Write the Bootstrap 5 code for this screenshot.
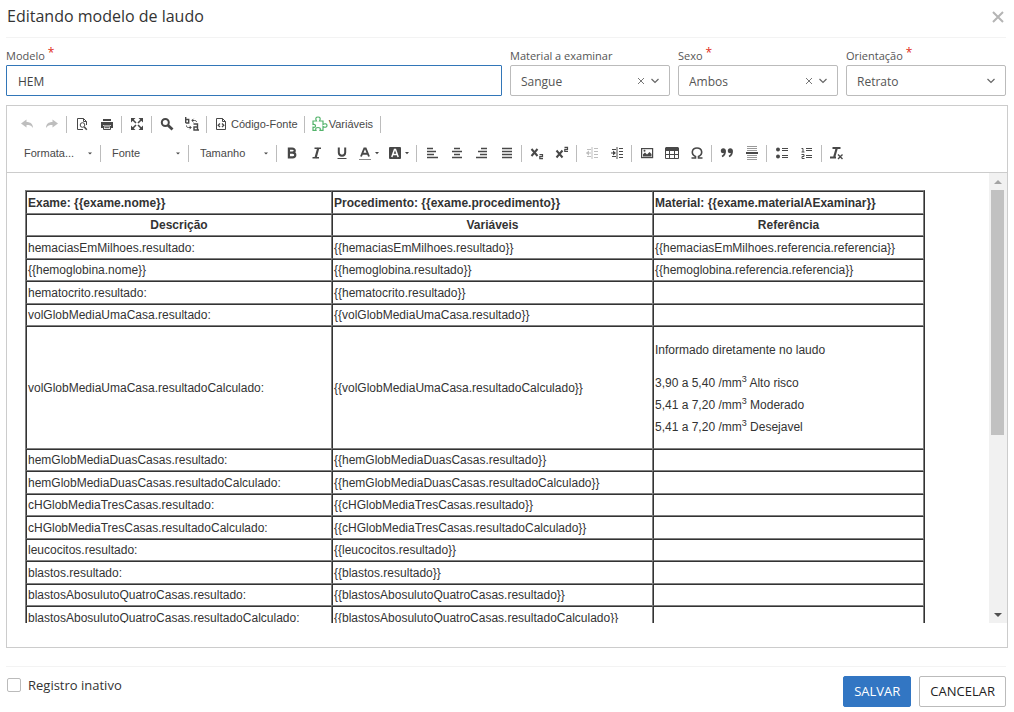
<!DOCTYPE html>
<html lang="pt-BR">
<head>
<meta charset="utf-8">
<meta name="viewport" content="width=device-width, initial-scale=1">
<title>Editando modelo de laudo</title>
<link href="https://cdn.jsdelivr.net/npm/bootstrap@5.3.0/dist/css/bootstrap.min.css" rel="stylesheet">
<style>
  body { font-family: "Open Sans", "Noto Sans", sans-serif; font-size: 12px; line-height: 18px; color: #333; background: #fff; }
  .page { padding: 0 8px 0 6px; }
  .page-head { height: 38px; padding: 0 0 0 1px; border-bottom: 1px solid #f3f3f3; }
  .page-head h1 { font-size: 16px; line-height: 32px; }
  .close-btn { width: 16px; height: 34px; color: #b5b5b5; }
  .fields { --bs-gutter-x: 8px; padding-top: 9px; }
  .fields .form-label { display: block; height: 18px; margin: 0; font-size: 11px; line-height: 18px; color: #555; font-weight: 500; }
  .req { color: #e02b20; font-size: 12px; line-height: 0; vertical-align: 3px; }
  .fields .form-control, .fields .form-select { height: 31px; font-size: 12px; line-height: 18px; padding: 7px 11px 5px; border: 1px solid #bbb; border-radius: 2px; color: #555; box-shadow: none; }
  .fields .form-select { padding-left: 10px; }
  .fields .form-control { border-color: #3276b8; border-radius: 1px; color: #444; }
  .fields .form-select { background-size: 8px 6px; background-position: right 10px center; background-image: url("data:image/svg+xml,%3csvg xmlns='http://www.w3.org/2000/svg' viewBox='0 0 8 6'%3e%3cpath d='M.5 1 4 4.5 7.500 1' fill='none' stroke='%23666' stroke-width='1.200'/%3e%3c/svg%3e"); }
  .clear-btn { right: 25px; top: 12px; width: 8px; height: 8px; color: #777; }
  .editor { margin: 9px -2px 0 0; border: 1px solid #ccc; padding-bottom: 24px; font-family: "Liberation Sans", Arial, sans-serif; }
  .tools { padding: 4px 7px; border-bottom: 1px solid #ccc; color: #484848; }
  .tool-row { height: 28px; margin-bottom: 1px; }
  .tool { width: 25px; height: 26px; padding: 0; border: 0; background: none; color: inherit; display: flex; align-items: center; justify-content: center; flex: none; font-size: 11px; line-height: 16px; }
  .tool svg { width: 16px; height: 16px; flex: none; }
  .tool.wide { width: 30px; }
  .tool.named { width: auto; padding: 0 4px; gap: 2px; }
  .tool.tight { gap: 1px; padding: 0 5px; }
  .tool:disabled { opacity: .35; }
  .sep { width: 1px; height: 17px; margin: 0 2px; background: #bcbcbc; flex: none; }
  .combo { width: 83px; height: 26px; padding: 0 20px 0 9px; border: 0; appearance: none; color: inherit; font-size: 11px; line-height: 16px; background: url("data:image/svg+xml,%3csvg xmlns='http://www.w3.org/2000/svg' viewBox='0 0 4 3'%3e%3cpath d='M0 .5h4L2 2.500z' fill='%23484848'/%3e%3c/svg%3e") right 6px center / 4px 3px no-repeat; }
  .combo.first { width: 84px; padding-left: 10px; }
  .doc { height: 450px; }
  .doc-body { overflow: auto; scrollbar-width: none; padding: 17px 20px 17px 18px; font-size: 12px; color: #333; }
  .doc-body::-webkit-scrollbar { display: none; }
  .report { width: 100%; max-width: 900px; table-layout: fixed; border-collapse: separate; border-spacing: 0; border: 1px solid; border-color: #808080 #333 #333 #808080; line-height: 18px; }
  .report td, .report th { border: 1px solid; border-color: #333 #808080 #808080 #333; padding: 1px; vertical-align: middle; white-space: nowrap; }
  .report tr:nth-child(odd) { height: 23px; }
  .report tr:nth-child(even) { height: 22px; }
  .report p { margin: 12px 0; line-height: 20px; }
  .report p + p { line-height: 22px; margin-bottom: 9px; }
  .report sup { font-size: 9px; line-height: 0; top: -5px; vertical-align: baseline; }
  .col-a { width: 306px; }
  .col-b { width: 321px; }
  .scroll { width: 18px; background: #f1f1f1; flex: none; padding: 0 3px 0 2px; }
  .scroll button { height: 17px; padding: 0; border: 0; background: none; color: #505050; }
  .thumb { height: 245px; background: #c1c1c1; }
  .page-foot { margin: 18px 0 0; padding: 9px 0 5px; border-top: 1px solid #f3f3f3; }
  .page-foot .form-check-input { width: 14px; height: 14px; margin: 2px 7px 0 1px; border: 1px solid #bbb; border-radius: 2px; flex: none; }
  .page-foot label { font-size: 13px; line-height: 18px; }
  .page-foot .btn { height: 31px; padding: 5px 10px; font-size: 13px; line-height: 19px; border-radius: 2px; }
  .save-btn { background: #3276c3; border-color: #3276c3; color: #fff; }
  .cancel-btn { background: #fff; border-color: #bbb; color: #222; }
</style>
</head>
<body>
<main class="page">
  <header class="page-head d-flex justify-content-between">
    <h1 class="fw-normal m-0">Editando modelo de laudo</h1>
    <button type="button" class="close-btn btn p-0 border-0 d-flex align-items-center justify-content-center" aria-label="Fechar"><svg width="12" height="12" viewBox="0 0 12 12"><path d="M1 1l10 10M11 1L1 11" stroke="currentColor" stroke-width="2"/></svg></button>
  </header>

  <form>
    <div class="row fields">
      <div class="col-6">
        <label class="form-label" for="modelo">Modelo <span class="req">*</span></label>
        <input id="modelo" class="form-control" type="text" value="HEM">
      </div>
      <div class="col-2">
        <label class="form-label" for="material">Material a examinar</label>
        <div class="position-relative">
          <select id="material" class="form-select"><option>Sangue</option></select>
          <button type="button" class="clear-btn btn p-0 border-0 d-flex position-absolute" aria-label="Limpar material"><svg width="8" height="8" viewBox="0 0 8 8"><path d="M1 1l6 6M7 1L1 7" stroke="currentColor"/></svg></button>
        </div>
      </div>
      <div class="col-2">
        <label class="form-label" for="sexo">Sexo <span class="req">*</span></label>
        <div class="position-relative">
          <select id="sexo" class="form-select"><option>Ambos</option></select>
          <button type="button" class="clear-btn btn p-0 border-0 d-flex position-absolute" aria-label="Limpar sexo"><svg width="8" height="8" viewBox="0 0 8 8"><path d="M1 1l6 6M7 1L1 7" stroke="currentColor"/></svg></button>
        </div>
      </div>
      <div class="col-2">
        <label class="form-label" for="orientacao">Orientação <span class="req">*</span></label>
        <select id="orientacao" class="form-select"><option>Retrato</option></select>
      </div>
    </div>

    <section class="editor">
      <div class="tools">
        <div class="tool-row d-flex align-items-center">
          <button type="button" class="tool" disabled aria-label="Desfazer"><svg viewBox="0 0 16 16"><path d="M2 7.500l5.500-4v2.500c4 0 6.500 2 6.500 6-1.500-2.500-3.500-3-6.500-3v2.500z" fill="currentColor"/></svg></button>
          <button type="button" class="tool" disabled aria-label="Refazer"><svg viewBox="0 0 16 16"><path d="M14 7.500l-5.500-4v2.500C4.500 6 2 8 2 12c1.500-2.500 3.500-3 6.500-3v2.500z" fill="currentColor"/></svg></button>
          <span class="sep"></span>
          <button type="button" class="tool" aria-label="Visualizar"><svg viewBox="0 0 16 16" fill="none" stroke="currentColor"><path d="M9 13.500H3.500v-11h6l3 3V9M9.500 2.500v3h3"/><circle cx="8.500" cy="9" r="2.300"/><path d="M10.300 11l2.500 2.800" stroke-width="1.600"/></svg></button>
          <button type="button" class="tool" aria-label="Imprimir"><svg viewBox="0 0 16 16"><path d="M4 3h8v2H4zM2 6h12v6h-2V9H4v3H2z" fill="currentColor"/><path d="M4.500 10h7v3.500h-7zM5.500 11.700h5" fill="#fff" stroke="currentColor"/></svg></button>
          <span class="sep"></span>
          <button type="button" class="tool" aria-label="Maximizar"><svg viewBox="0 0 16 16"><path d="M2 2h4.500L2 6.500zM14 2H9.500L14 6.500zM2 14h4.500L2 9.500zM14 14H9.500L14 9.500z" fill="currentColor"/><path d="M3 3l4 4M13 3L9 7M3 13l4-4M13 13L9 9" stroke="currentColor" stroke-width="1.600"/></svg></button>
          <span class="sep"></span>
          <button type="button" class="tool" aria-label="Localizar"><svg viewBox="0 0 16 16" fill="none" stroke="currentColor"><circle cx="6.300" cy="6.500" r="3.500" stroke-width="2"/><path d="M9 9.300l4.500 4.200" stroke-width="2.800"/></svg></button>
          <button type="button" class="tool" aria-label="Substituir"><svg viewBox="0 0 16 16" fill="none" stroke="currentColor" stroke-width="1.400"><path d="M1.700 1v6M1.700 3.500h3V7h-3M9.500 8h4v6H10v-3h3.500M14 14h1"/><path d="M8 4.500h2.500c1.500 0 2 .5 2 1.500M9.500 2.800L7.800 4.500l1.700 1.700M2.500 9.500c0 1.500.5 2 2 2H7M5.500 9.800L7.200 11.500l-1.700 1.700" stroke-width="1"/></svg></button>
          <span class="sep"></span>
          <button type="button" class="tool named"><svg viewBox="0 0 16 16" fill="none" stroke="currentColor"><path d="M3.500 2.500h6l3 3v8h-9zM9.500 2.500v3h3"/><path d="M7 7.500L5.200 9.300 7 11M9 7.500l1.800 1.800L9 11" stroke-width="1.300"/></svg>Código-Fonte</button>
          <span class="sep"></span>
          <button type="button" class="tool named tight"><svg viewBox="0 0 16 16" fill="none" stroke="#53b36b" stroke-width="1.200"><path d="M1 5h3.500C3 2.500 4 1 6 1s3 1.500 1.500 4H11v3.500c2-1.300 4-.8 4 1s-2 2.300-4 1V14.400H8c1-2-.3-2.900-2-2.900s-3 .9-2 2.900H1v-3.200c2 .5 2.500-.5 2.500-1.400S3 8.200 1 8.500z"/></svg>Variáveis</button>
          <span class="sep"></span>
        </div>
        <div class="tool-row d-flex align-items-center">
          <select class="combo first" aria-label="Formatação"><option>Formata...</option></select>
          <span class="sep"></span>
          <select class="combo" aria-label="Fonte"><option>Fonte</option></select>
          <span class="sep"></span>
          <select class="combo" aria-label="Tamanho"><option>Tamanho</option></select>
          <span class="sep"></span>
          <button type="button" class="tool" aria-label="Negrito"><svg viewBox="0 0 16 16" fill="none" stroke="currentColor" stroke-width="2.200"><path d="M4.900 3.600h3.300c3.500 0 3.300 4 0 4H4.900h3.700c3.700 0 3.500 4.800 0 4.800H4.900z"/></svg></button>
          <button type="button" class="tool" aria-label="Itálico"><svg viewBox="0 0 16 16" fill="none" stroke="currentColor"><path d="M5.500 3.200H12M3.500 12.800H10" stroke-width="1.500"/><path d="M9.300 3L6.500 13" stroke-width="2.200"/></svg></button>
          <button type="button" class="tool" aria-label="Sublinhado"><svg viewBox="0 0 16 16" fill="none" stroke="currentColor"><path d="M4.800 2.500v5c0 4.200 6.400 4.200 6.400 0v-5" stroke-width="2"/><path d="M3.500 13.500h9"/></svg></button>
          <button type="button" class="tool wide" aria-label="Cor do texto"><svg viewBox="0 0 16 16" fill="none" stroke="currentColor"><path d="M4 11.500L7.300 3.500h1.400l3.300 8M5.500 8.700h5" stroke-width="1.900"/><path d="M2 14.500h12" stroke="#888"/></svg><svg viewBox="0 0 8 16" style="width:8px"><path d="M2 7h4L4 9.300z" fill="currentColor"/></svg></button>
          <button type="button" class="tool wide" aria-label="Cor do plano de fundo"><svg viewBox="0 0 16 16"><rect x="2" y="2" width="12" height="12" rx="1" fill="currentColor"/><path d="M4.800 12L7.500 4.500h1L11.200 12M6 9.500h4" fill="none" stroke="#fff" stroke-width="1.500"/></svg><svg viewBox="0 0 8 16" style="width:8px"><path d="M2 7h4L4 9.300z" fill="currentColor"/></svg></button>
          <span class="sep"></span>
          <button type="button" class="tool" aria-label="Alinhar à esquerda"><svg viewBox="0 0 16 16" stroke="currentColor" stroke-width="1.700"><path d="M3 3.500h6M3 6.500h9M3 9.500h7M3 12.500h11"/></svg></button>
          <button type="button" class="tool" aria-label="Centralizar"><svg viewBox="0 0 16 16" stroke="currentColor" stroke-width="1.700"><path d="M5 3.500h6M3 6.500h10M5 9.500h6M3 12.500h10"/></svg></button>
          <button type="button" class="tool" aria-label="Alinhar à direita"><svg viewBox="0 0 16 16" stroke="currentColor" stroke-width="1.700"><path d="M7 3.500h6M4 6.500h9M6 9.500h7M2 12.500h11"/></svg></button>
          <button type="button" class="tool" aria-label="Justificado"><svg viewBox="0 0 16 16" stroke="currentColor" stroke-width="1.700"><path d="M3 3.500h10M3 6.500h10M3 9.500h10M3 12.500h10"/></svg></button>
          <span class="sep"></span>
          <button type="button" class="tool" aria-label="Subscrito"><svg viewBox="0 0 16 16" fill="none" stroke="currentColor"><path d="M2.500 4l6 7M8.500 4l-6 7" stroke-width="2"/><path d="M10.500 9.700h3v2h-2.700v2h3.200" stroke-width="1.200"/></svg></button>
          <button type="button" class="tool" aria-label="Sobrescrito"><svg viewBox="0 0 16 16" fill="none" stroke="currentColor"><path d="M2.500 5.500l6 7M8.500 5.500l-6 7" stroke-width="2"/><path d="M10.500 2.300h3v2h-2.700v2h3.200" stroke-width="1.200"/></svg></button>
          <span class="sep"></span>
          <button type="button" class="tool" disabled aria-label="Diminuir recuo"><svg viewBox="0 0 16 16" fill="none" stroke="currentColor"><path d="M8 2v12M10 3.500h4M10 6.500h4M10 9.500h4M10 12.500h4M2.500 8H7M3 4.500h4M3 11.500h4"/><path d="M2 8l3-2.500v5z" fill="currentColor" stroke="none"/></svg></button>
          <button type="button" class="tool" aria-label="Aumentar recuo"><svg viewBox="0 0 16 16" fill="none" stroke="currentColor"><path d="M8 2v12M10 3.500h4M10 6.500h4M10 9.500h4M10 12.500h4M2 8h4M3 4.500h4M3 11.500h4"/><path d="M7 8L4 5.500v5z" fill="currentColor" stroke="none"/></svg></button>
          <span class="sep"></span>
          <button type="button" class="tool" aria-label="Imagem"><svg viewBox="0 0 16 16"><rect x="2.600" y="3.600" width="11" height="9" fill="none" stroke="currentColor" stroke-width="1.200"/><path d="M4 11.500V9.300l2-1.800 2 2L10.500 7l2 2v2.500z" fill="currentColor"/><circle cx="5.500" cy="5.800" r="1" fill="currentColor"/></svg></button>
          <button type="button" class="tool" aria-label="Tabela"><svg viewBox="0 0 16 16"><path d="M1.500 2h13v4h-13z" fill="currentColor"/><path d="M1.500 3v10.500h13V3M1.500 9.500h13M5.500 5v8.500M10.500 5v8.500" fill="none" stroke="currentColor"/></svg></button>
          <button type="button" class="tool" aria-label="Caractere especial"><svg viewBox="0 0 16 16" fill="none" stroke="currentColor" stroke-width="1.600"><path d="M2.500 13h4v-1.500C1.500 9 2.700 3 8 3s6.500 6 1.500 8.500V13h4"/></svg></button>
          <span class="sep"></span>
          <button type="button" class="tool" aria-label="Citação"><svg viewBox="0 0 16 16"><g fill="currentColor"><circle cx="4.300" cy="5.800" r="2.500"/><circle cx="11.300" cy="5.800" r="2.500"/></g><path d="M6 5.500c.3 3-.8 5-3 6M13 5.500c.3 3-.8 5-3 6" fill="none" stroke="currentColor" stroke-width="1.600"/></svg></button>
          <button type="button" class="tool" aria-label="Linha horizontal"><svg viewBox="0 0 16 16"><path d="M3 1.500h10M3 3.500h10M3 5.500h10M3 10.500h10M3 12.500h10M3 14.500h10" stroke="#999"/><path d="M2 8h12" stroke="currentColor" stroke-width="2"/></svg></button>
          <span class="sep"></span>
          <button type="button" class="tool" aria-label="Lista com marcadores"><svg viewBox="0 0 16 16"><circle cx="4" cy="4.500" r="2" fill="currentColor"/><circle cx="4" cy="11.500" r="2" fill="currentColor"/><path d="M8 3.500h6M8 5.500h6M8 10.500h6M8 12.500h6" stroke="currentColor"/></svg></button>
          <button type="button" class="tool" aria-label="Lista numerada"><svg viewBox="0 0 16 16" fill="none" stroke="currentColor"><path d="M2.500 3.500H4v3.500M2.500 7h3M2.500 9.500h2.500v2H3v2h2.500M7 3.500h6M7 5.500h6M7 10.500h6M7 12.500h6"/></svg></button>
          <span class="sep"></span>
          <button type="button" class="tool" aria-label="Remover formatação"><svg viewBox="0 0 16 16" fill="none" stroke="currentColor"><path d="M3.500 3h8M1 12.500h6" stroke-width="1.800"/><path d="M7.800 3L5.200 12" stroke-width="2.200"/><path d="M9 9.500l4.500 4.500M13.500 9.500L9 14" stroke-width="1.400"/></svg></button>
        </div>
      </div>

      <div class="doc d-flex">
        <div class="doc-body flex-grow-1">
          <table class="report">
            <colgroup><col class="col-a"><col class="col-b"><col></colgroup>
            <tbody>
              <tr><td><strong>Exame: {{exame.nome}}</strong></td><td><strong>Procedimento: {{exame.procedimento}}</strong></td><td><strong>Material: {{exame.materialAExaminar}}</strong></td></tr>
              <tr class="text-center"><th>Descrição</th><th>Variáveis</th><th>Referência</th></tr>
              <tr><td>hemaciasEmMilhoes.resultado:</td><td>{{hemaciasEmMilhoes.resultado}}</td><td>{{hemaciasEmMilhoes.referencia.referencia}}</td></tr>
              <tr><td>{{hemoglobina.nome}}</td><td>{{hemoglobina.resultado}}</td><td>{{hemoglobina.referencia.referencia}}</td></tr>
              <tr><td>hematocrito.resultado:</td><td>{{hematocrito.resultado}}</td><td></td></tr>
              <tr><td>volGlobMediaUmaCasa.resultado:</td><td>{{volGlobMediaUmaCasa.resultado}}</td><td></td></tr>
              <tr><td>volGlobMediaUmaCasa.resultadoCalculado:</td><td>{{volGlobMediaUmaCasa.resultadoCalculado}}</td><td><p>Informado diretamente no laudo</p><p>3,90 a 5,40 /mm<sup>3</sup> Alto risco<br>5,41 a 7,20 /mm<sup>3</sup> Moderado<br>5,41 a 7,20 /mm<sup>3</sup> Desejavel</p></td></tr>
              <tr><td>hemGlobMediaDuasCasas.resultado:</td><td>{{hemGlobMediaDuasCasas.resultado}}</td><td></td></tr>
              <tr><td>hemGlobMediaDuasCasas.resultadoCalculado:</td><td>{{hemGlobMediaDuasCasas.resultadoCalculado}}</td><td></td></tr>
              <tr><td>cHGlobMediaTresCasas.resultado:</td><td>{{cHGlobMediaTresCasas.resultado}}</td><td></td></tr>
              <tr><td>cHGlobMediaTresCasas.resultadoCalculado:</td><td>{{cHGlobMediaTresCasas.resultadoCalculado}}</td><td></td></tr>
              <tr><td>leucocitos.resultado:</td><td>{{leucocitos.resultado}}</td><td></td></tr>
              <tr><td>blastos.resultado:</td><td>{{blastos.resultado}}</td><td></td></tr>
              <tr><td>blastosAbosulutoQuatroCasas.resultado:</td><td>{{blastosAbosulutoQuatroCasas.resultado}}</td><td></td></tr>
              <tr><td>blastosAbosulutoQuatroCasas.resultadoCalculado:</td><td>{{blastosAbosulutoQuatroCasas.resultadoCalculado}}</td><td></td></tr>
            </tbody>
          </table>
        </div>
        <div class="scroll d-flex flex-column">
          <button type="button" class="d-flex align-items-center justify-content-center" aria-label="Rolar para cima"><svg width="8" height="4" viewBox="0 0 8 4"><path d="M0 4l4-4 4 4z" fill="#a3a3a3"/></svg></button>
          <div class="thumb"></div>
          <button type="button" class="mt-auto d-flex align-items-center justify-content-center" aria-label="Rolar para baixo"><svg width="8" height="4" viewBox="0 0 8 4"><path d="M0 0l4 4 4-4z" fill="currentColor"/></svg></button>
        </div>
      </div>
    </section>

    <footer class="page-foot d-flex justify-content-between align-items-start">
      <div class="d-flex align-items-start">
        <input class="form-check-input" type="checkbox" id="inativo">
        <label for="inativo">Registro inativo</label>
      </div>
      <div class="d-flex gap-2">
        <button type="submit" class="btn save-btn">SALVAR</button>
        <button type="button" class="btn cancel-btn">CANCELAR</button>
      </div>
    </footer>
  </form>
</main>
<script src="https://cdn.jsdelivr.net/npm/bootstrap@5.3.0/dist/js/bootstrap.bundle.min.js"></script>
</body>
</html>
